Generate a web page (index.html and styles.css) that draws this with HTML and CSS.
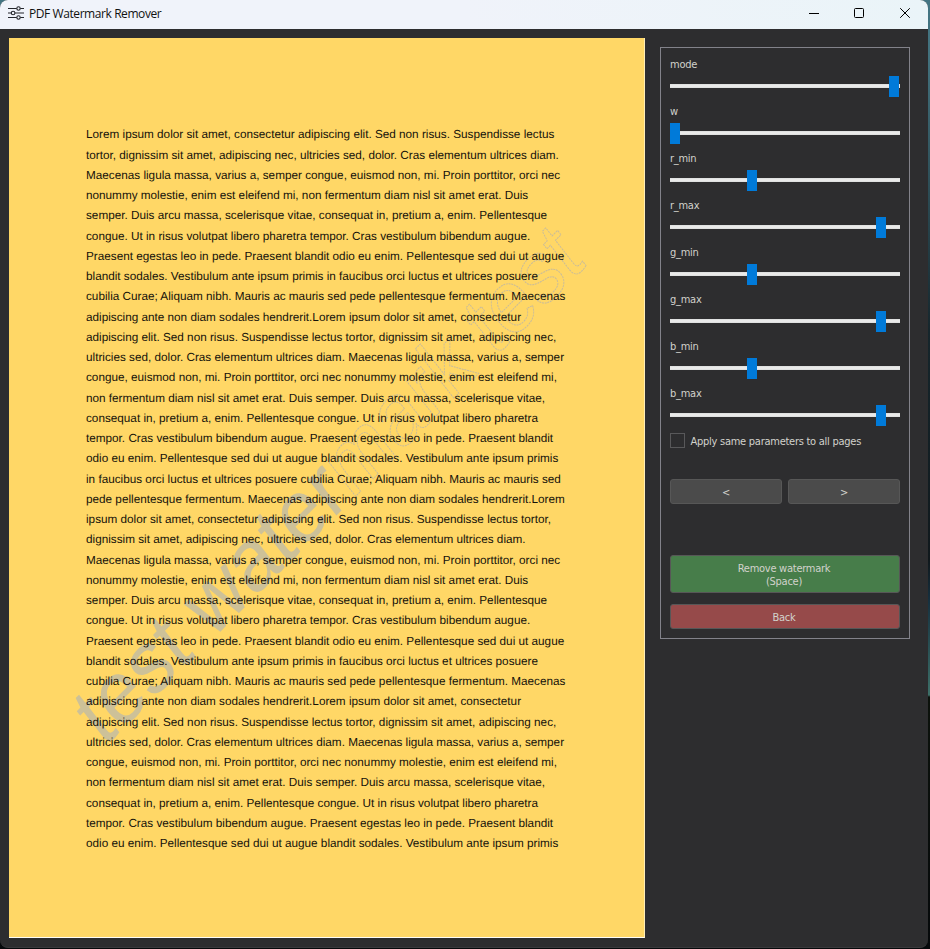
FILE: index.html
```html
<!DOCTYPE html>
<html lang="en">
<head>
<meta charset="utf-8">
<title>PDF Watermark Remover</title>
<link rel="stylesheet" href="styles.css">
</head>
<body>
<div class="window">
  <header class="titlebar">
    <svg class="app-icon" width="16" height="14" viewBox="0 0 16 14" fill="none" stroke="#24262c" stroke-width="1.1">
      <path d="M0 2.5H8.7M12.3 2.5H16M0 7H3.2M7 7H16M0 11.5H8.7M12.3 11.5H16"/>
      <circle cx="10.5" cy="2.5" r="1.7"/><circle cx="5.1" cy="7" r="1.8"/><circle cx="10.5" cy="11.5" r="1.7"/>
    </svg>
    <span class="title">PDF Watermark Remover</span>
    <div class="controls">
      <svg class="minimize" width="10" height="10" viewBox="0 0 10 10"><path d="M0 5.5H10" stroke="#000"/></svg>
      <svg width="10" height="10" viewBox="0 0 10 10"><rect x=".5" y=".5" width="9" height="9" rx="1" fill="none" stroke="#000"/></svg>
      <svg width="10" height="10" viewBox="0 0 10 10"><path d="M.2 .2L9.8 9.8M9.8 .2L.2 9.8" stroke="#000"/></svg>
    </div>
  </header>
  <main class="content">
    <section class="page">
      <svg class="watermark" width="636" height="900" viewBox="9 38 636 900">
        <text transform="translate(104 748) rotate(-45) skewX(-7) scale(1 1.06)"><tspan class="solid">test water</tspan><tspan class="ghost">mark test</tspan></text>
      </svg>
      <div class="lines">
        <p>Lorem ipsum dolor sit amet, consectetur adipiscing elit. Sed non risus. Suspendisse lectus</p>
        <p>tortor, dignissim sit amet, adipiscing nec, ultricies sed, dolor. Cras elementum ultrices diam.</p>
        <p>Maecenas ligula massa, varius a, semper congue, euismod non, mi. Proin porttitor, orci nec</p>
        <p>nonummy molestie, enim est eleifend mi, non fermentum diam nisl sit amet erat. Duis</p>
        <p>semper. Duis arcu massa, scelerisque vitae, consequat in, pretium a, enim. Pellentesque</p>
        <p>congue. Ut in risus volutpat libero pharetra tempor. Cras vestibulum bibendum augue.</p>
        <p>Praesent egestas leo in pede. Praesent blandit odio eu enim. Pellentesque sed dui ut augue</p>
        <p>blandit sodales. Vestibulum ante ipsum primis in faucibus orci luctus et ultrices posuere</p>
        <p>cubilia Curae; Aliquam nibh. Mauris ac mauris sed pede pellentesque fermentum. Maecenas</p>
        <p>adipiscing ante non diam sodales hendrerit.Lorem ipsum dolor sit amet, consectetur</p>
        <p>adipiscing elit. Sed non risus. Suspendisse lectus tortor, dignissim sit amet, adipiscing nec,</p>
        <p>ultricies sed, dolor. Cras elementum ultrices diam. Maecenas ligula massa, varius a, semper</p>
        <p>congue, euismod non, mi. Proin porttitor, orci nec nonummy molestie, enim est eleifend mi,</p>
        <p>non fermentum diam nisl sit amet erat. Duis semper. Duis arcu massa, scelerisque vitae,</p>
        <p>consequat in, pretium a, enim. Pellentesque congue. Ut in risus volutpat libero pharetra</p>
        <p>tempor. Cras vestibulum bibendum augue. Praesent egestas leo in pede. Praesent blandit</p>
        <p>odio eu enim. Pellentesque sed dui ut augue blandit sodales. Vestibulum ante ipsum primis</p>
        <p>in faucibus orci luctus et ultrices posuere cubilia Curae; Aliquam nibh. Mauris ac mauris sed</p>
        <p>pede pellentesque fermentum. Maecenas adipiscing ante non diam sodales hendrerit.Lorem</p>
        <p>ipsum dolor sit amet, consectetur adipiscing elit. Sed non risus. Suspendisse lectus tortor,</p>
        <p>dignissim sit amet, adipiscing nec, ultricies sed, dolor. Cras elementum ultrices diam.</p>
        <p>Maecenas ligula massa, varius a, semper congue, euismod non, mi. Proin porttitor, orci nec</p>
        <p>nonummy molestie, enim est eleifend mi, non fermentum diam nisl sit amet erat. Duis</p>
        <p>semper. Duis arcu massa, scelerisque vitae, consequat in, pretium a, enim. Pellentesque</p>
        <p>congue. Ut in risus volutpat libero pharetra tempor. Cras vestibulum bibendum augue.</p>
        <p>Praesent egestas leo in pede. Praesent blandit odio eu enim. Pellentesque sed dui ut augue</p>
        <p>blandit sodales. Vestibulum ante ipsum primis in faucibus orci luctus et ultrices posuere</p>
        <p>cubilia Curae; Aliquam nibh. Mauris ac mauris sed pede pellentesque fermentum. Maecenas</p>
        <p>adipiscing ante non diam sodales hendrerit.Lorem ipsum dolor sit amet, consectetur</p>
        <p>adipiscing elit. Sed non risus. Suspendisse lectus tortor, dignissim sit amet, adipiscing nec,</p>
        <p>ultricies sed, dolor. Cras elementum ultrices diam. Maecenas ligula massa, varius a, semper</p>
        <p>congue, euismod non, mi. Proin porttitor, orci nec nonummy molestie, enim est eleifend mi,</p>
        <p>non fermentum diam nisl sit amet erat. Duis semper. Duis arcu massa, scelerisque vitae,</p>
        <p>consequat in, pretium a, enim. Pellentesque congue. Ut in risus volutpat libero pharetra</p>
        <p>tempor. Cras vestibulum bibendum augue. Praesent egestas leo in pede. Praesent blandit</p>
        <p>odio eu enim. Pellentesque sed dui ut augue blandit sodales. Vestibulum ante ipsum primis</p>
      </div>
    </section>
    <aside class="panel">
      <div class="field"><label>mode</label><div class="slider"><i style="margin-left:219px"></i></div></div>
      <div class="field"><label>w</label><div class="slider"><i style="margin-left:0px"></i></div></div>
      <div class="field"><label>r_min</label><div class="slider"><i style="margin-left:77px"></i></div></div>
      <div class="field"><label>r_max</label><div class="slider"><i style="margin-left:206px"></i></div></div>
      <div class="field"><label>g_min</label><div class="slider"><i style="margin-left:77px"></i></div></div>
      <div class="field"><label>g_max</label><div class="slider"><i style="margin-left:206px"></i></div></div>
      <div class="field"><label>b_min</label><div class="slider"><i style="margin-left:77px"></i></div></div>
      <div class="field"><label>b_max</label><div class="slider"><i style="margin-left:206px"></i></div></div>
      <div class="check"><span class="box"></span><span class="check-text">Apply same parameters to all pages</span></div>
      <div class="nav"><button>&lt;</button><button>&gt;</button></div>
      <button class="remove">Remove watermark<br>(Space)</button>
      <button class="back">Back</button>
    </aside>
  </main>
</div>
</body>
</html>
```
FILE: styles.css
```css
* { box-sizing: border-box; }
body {
  margin: 0;
  width: 930px;
  height: 949px;
  overflow: hidden;
  background: linear-gradient(#437583 0, #42707c 60px, #16262c 330px, #10181c 560px, #16303f 600px, #3d6f68 695px, #0c120c 697px, #06090b 100%);
}
.window {
  width: 928px;
  height: 948px;
  border-radius: 8px;
  overflow: hidden;
  background: #2d2d2f;
  border-bottom: 1px solid #3a3a3c;
}
.titlebar {
  display: flex;
  align-items: center;
  height: 29px;
  padding: 0 18px 3px 8px;
  background: linear-gradient(90deg, #f0f3fa, #f0f3fa 50%, #eaf4f8);
}
.title {
  margin: 2px 0 0 5px;
  font: 12px/16px "Open Sans", "Noto Sans", sans-serif;
  letter-spacing: -0.42px;
  color: #111;
}
.controls { display: flex; gap: 36px; margin-left: auto; }
.minimize { margin-right: -1px; }
.content { display: flex; align-items: flex-start; padding: 9px 18px 0 9px; }
.page {
  position: relative;
  width: 636px;
  height: 900px;
  padding: 87.4px 0 0 77px;
  background: #ffd766;
  border-right: 1px solid #ffeeb6;
  border-bottom: 1px solid #fffdf4;
}
.watermark { position: absolute; left: 0; top: 0; }
.watermark text { font: 80.8px "Liberation Sans", Arial, sans-serif; }
.solid { fill: #cdc198; }
.ghost { fill: none; stroke: #c9bc9a; stroke-width: 0.9; stroke-dasharray: 2 0.8; }
.lines { position: relative; }
.lines p {
  margin: 0;
  height: 20.26px;
  font: 11.74px/20.26px "Liberation Sans", Arial, sans-serif;
  text-rendering: geometricPrecision;
  white-space: nowrap;
  color: #15120a;
}
.panel {
  width: 250px;
  height: 592px;
  margin: 9px 0 0 15px;
  padding: 9px 9px 0;
  border: 1px solid #82828a;
  font: 11px/14px "DejaVu Sans Condensed", "DejaVu Sans", sans-serif;
  font-stretch: condensed;
  letter-spacing: -0.26px;
  color: #d2d2cc;
}
.field { height: 47px; }
.field label { display: block; height: 19px; padding-top: 1px; }
.slider {
  display: flex;
  align-items: center;
  height: 21px;
  background: linear-gradient(#d6d8d8, #e9e9e9 25%, #e9e9e9 75%, #d6d8d8) 0 8px / 230px 4px no-repeat;
}
.slider i { width: 10px; height: 21px; background: #007ad9; }
.check { display: flex; align-items: center; height: 15px; }
.check-text { padding-top: 2px; }
.box { width: 15px; height: 15px; margin-right: 5.5px; border: 1px solid #58585a; }
.nav { display: flex; gap: 6px; margin: 31px 0 51px; }
button {
  display: block;
  width: 230px;
  height: 25px;
  padding: 2px 2px 0 0;
  border: 1px solid #575757;
  border-radius: 3px;
  background: #4b4b4b;
  font: inherit;
  letter-spacing: inherit;
  line-height: 13px;
  color: #d2d2cc;
}
.nav button { width: 112px; padding-right: 0; font-size: 11px; }
.remove { height: 38px; background: #477d4a; }
.back { margin-top: 11px; background: #964a4a; }
```
